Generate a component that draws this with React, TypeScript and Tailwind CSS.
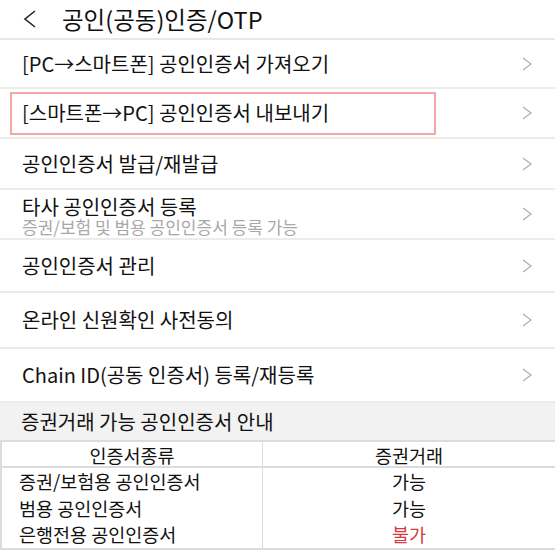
import React from 'react';

const font = { fontFamily: '"Noto Sans CJK KR", "Noto Sans", sans-serif' };

const Chevron = () => (
  <svg width="12" height="16" viewBox="0 0 12 16" className="shrink-0">
    <path d="M2 2 L10 8 L2 14" fill="none" stroke="#b0b0b0" strokeWidth="1.3" />
  </svg>
);

const Row = ({ title, sub, h }: { title: string; sub?: string; h: string }) => (
  <div className={`flex items-center justify-between pl-[22px] pr-[22px] border-b-2 border-[#ececec] ${h}`}>
    <div className={`flex flex-col ${sub ? 'pt-[3px]' : ''}`}>
      <span className="text-[20px] text-[#111] leading-[22px]">{title}</span>
      {sub && <span className="text-[17px] text-[#a8a8a8] leading-[18px]">{sub}</span>}
    </div>
    <Chevron />
  </div>
);

const App = () => {
  const table = [
    { name: '증권/보험용 공인인증서', ok: '가능', red: false },
    { name: '범용 공인인증서', ok: '가능', red: false },
    { name: '은행전용 공인인증서', ok: '불가', red: true },
  ];

  return (
    <div className="w-[555px] h-[555px] bg-white overflow-hidden" style={font}>
      <div className="h-[40px] flex items-center border-b-2 border-[#e8e8e8]">
        <svg width="16" height="20" viewBox="0 0 16 20" className="ml-[22px]">
          <path d="M13 2 L3 10 L13 18" fill="none" stroke="#222" strokeWidth="1.6" />
        </svg>
        <span className="ml-[24px] text-[23.5px] text-[#111] leading-[26px]">공인(공동)인증/OTP</span>
      </div>

      <Row title="[PC→스마트폰] 공인인증서 가져오기" h="h-[49px]" />

      <div className="h-[50px] flex items-center justify-between pl-[10px] pr-[22px] border-b-2 border-[#ececec]">
        <div className="w-[426px] h-[43px] border-2 border-[#f3a7a7] pl-[10px] flex items-center">
          <span className="text-[20px] text-[#111]">[스마트폰→PC] 공인인증서 내보내기</span>
        </div>
        <Chevron />
      </div>

      <Row title="공인인증서 발급/재발급" h="h-[51px]" />
      <Row title="타사 공인인증서 등록" sub="증권/보험 및 범용 공인인증서 등록 가능" h="h-[50px]" />
      <Row title="공인인증서 관리" h="h-[53px]" />
      <Row title="온라인 신원확인 사전동의" h="h-[56px]" />
      <Row title="Chain ID(공동 인증서) 등록/재등록" h="h-[54px]" />

      <div className="h-[37px] bg-[#f2f2f2] flex items-center pl-[21px]">
        <span className="text-[20px] text-[#111]">증권거래 가능 공인인증서 안내</span>
      </div>

      <div className="border-l-2 border-t-2 border-[#dcdcdc] text-[18.5px] text-[#111]">
        <div className="grid grid-cols-[261px_1fr] h-[26px] border-b-2 border-[#dcdcdc]">
          <div className="flex items-center justify-center border-r border-[#dcdcdc]">인증서종류</div>
          <div className="flex items-center justify-center">증권거래</div>
        </div>
        {table.map(r => (
          <div key={r.name} className="grid grid-cols-[261px_1fr] h-[26.5px]">
            <div className="flex items-center pl-[17px] border-r border-[#dcdcdc]">{r.name}</div>
            <div className={`flex items-center justify-center ${r.red ? 'text-[#d63a3c]' : ''}`}>{r.ok}</div>
          </div>
        ))}
        <div className="border-b-2 border-[#dcdcdc]" />
      </div>
    </div>
  );
};

export default App;
